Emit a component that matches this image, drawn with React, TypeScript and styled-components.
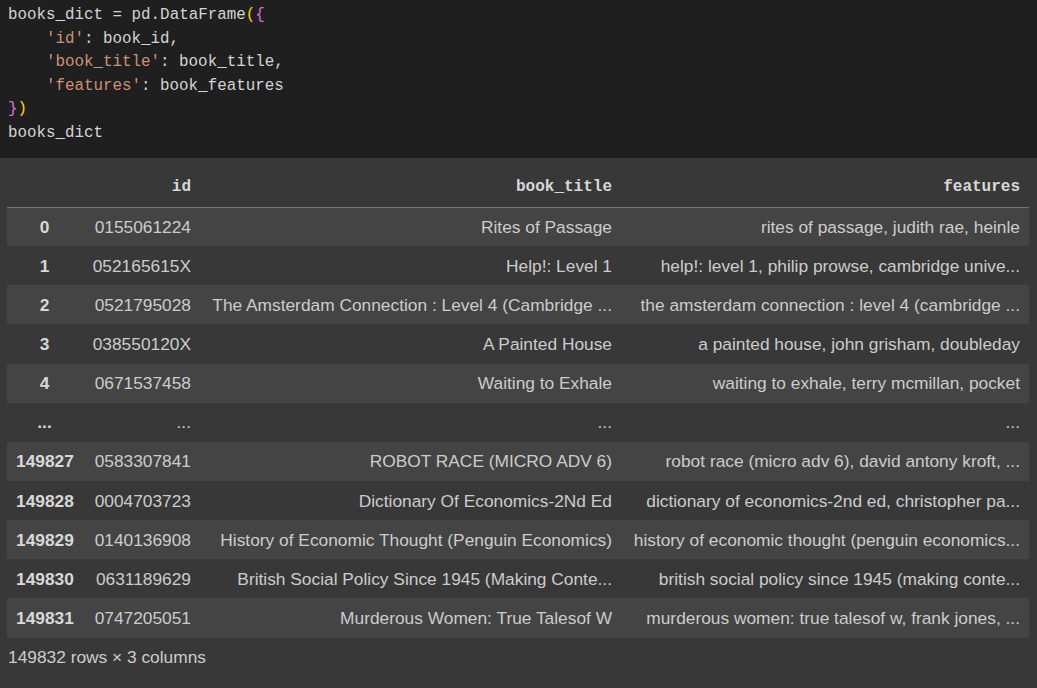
import React from "react";
import styled, { createGlobalStyle } from "styled-components";

const Global = createGlobalStyle`
  html, body { margin: 0; padding: 0; background: #383838; }
  body { font-family: "Liberation Sans", Arial, sans-serif; }
`;

const Page = styled.div`
  width: 1037px;
  min-height: 688px;
  background: #383838;
  display: flex;
  flex-direction: column;
`;

const CodeBlock = styled.div`
  background: #1f1f1f;
  padding: 4px 8px 12px 8px;
  height: 158px;
  box-sizing: border-box;
  font-family: "Liberation Mono", "DejaVu Sans Mono", monospace;
  font-size: 15.85px;
  line-height: 23.6px;
  color: #d4d4d4;
  display: flex;
  flex-direction: column;
`;

const Line = styled.div<{ $indent?: boolean }>`
  white-space: pre;
  padding-left: ${(p) => (p.$indent ? "38px" : "0")};
`;

const Str = styled.span`color: #ce9178;`;
const Br = styled.span<{ $c: string }>`color: ${(p) => p.$c};`;

const Output = styled.div`
  padding: 10px 8px 0 7px;
  display: flex;
  flex-direction: column;
`;

const Table = styled.table`
  border-collapse: collapse;
  table-layout: fixed;
  width: 1022px;
  color: #cccccc;
  font-size: 17.33px;
`;

const HeadCell = styled.th`
  height: 39px;
  padding: 0 9px;
  text-align: right;
  font-family: "Liberation Mono", "DejaVu Sans Mono", monospace;
  font-size: 16px;
  font-weight: bold;
  color: #d8d8d8;
  border-bottom: 1px solid #757575;
  vertical-align: middle;
  box-sizing: border-box;
`;

const Row = styled.tr<{ $striped: boolean }>`
  background: ${(p) => (p.$striped ? "#444444" : "transparent")};
`;

const IndexCell = styled.th`
  height: 39.15px;
  padding: 1px 9px 0 9px;
  text-align: center;
  font-weight: bold;
  color: #d8d8d8;
  white-space: nowrap;
  box-sizing: border-box;
`;

const Cell = styled.td`
  height: 39.15px;
  padding: 1px 9px 0 9px;
  text-align: right;
  white-space: nowrap;
  overflow: hidden;
  box-sizing: border-box;
`;

const Footer = styled.div`
  font-size: 17.33px;
  color: #cccccc;
  padding: 7px 1px 0 1px;
  line-height: 24px;
`;

const rows: [string, string, string, string][] = [
  ["0", "0155061224", "Rites of Passage", "rites of passage, judith rae, heinle"],
  ["1", "052165615X", "Help!: Level 1", "help!: level 1, philip prowse, cambridge unive..."],
  ["2", "0521795028", "The Amsterdam Connection : Level 4 (Cambridge ...", "the amsterdam connection : level 4 (cambridge ..."],
  ["3", "038550120X", "A Painted House", "a painted house, john grisham, doubleday"],
  ["4", "0671537458", "Waiting to Exhale", "waiting to exhale, terry mcmillan, pocket"],
  ["...", "...", "...", "..."],
  ["149827", "0583307841", "ROBOT RACE (MICRO ADV 6)", "robot race (micro adv 6), david antony kroft, ..."],
  ["149828", "0004703723", "Dictionary Of Economics-2Nd Ed", "dictionary of economics-2nd ed, christopher pa..."],
  ["149829", "0140136908", "History of Economic Thought (Penguin Economics)", "history of economic thought (penguin economics..."],
  ["149830", "0631189629", "British Social Policy Since 1945 (Making Conte...", "british social policy since 1945 (making conte..."],
  ["149831", "0747205051", "Murderous Women: True Talesof W", "murderous women: true talesof w, frank jones, ..."],
];

export default function App() {
  return (
    <Page>
      <Global />
      <CodeBlock>
        <Line>
          books_dict = pd.DataFrame<Br $c="#ffd700">(</Br><Br $c="#da70d6">{"{"}</Br>
        </Line>
        <Line $indent>
          <Str>'id'</Str>: book_id,
        </Line>
        <Line $indent>
          <Str>'book_title'</Str>: book_title,
        </Line>
        <Line $indent>
          <Str>'features'</Str>: book_features
        </Line>
        <Line>
          <Br $c="#da70d6">{"}"}</Br><Br $c="#ffd700">)</Br>
        </Line>
        <Line>books_dict</Line>
      </CodeBlock>
      <Output>
        <Table>
          <colgroup>
            <col style={{ width: 75 }} />
            <col style={{ width: 118 }} />
            <col style={{ width: 421 }} />
            <col style={{ width: 408 }} />
          </colgroup>
          <thead>
            <tr>
              <HeadCell />
              <HeadCell>id</HeadCell>
              <HeadCell>book_title</HeadCell>
              <HeadCell>features</HeadCell>
            </tr>
          </thead>
          <tbody>
            {rows.map((r, i) => (
              <Row key={i} $striped={i % 2 === 0}>
                <IndexCell>{r[0]}</IndexCell>
                <Cell>{r[1]}</Cell>
                <Cell>{r[2]}</Cell>
                <Cell>{r[3]}</Cell>
              </Row>
            ))}
          </tbody>
        </Table>
        <Footer>149832 rows × 3 columns</Footer>
      </Output>
    </Page>
  );
}
